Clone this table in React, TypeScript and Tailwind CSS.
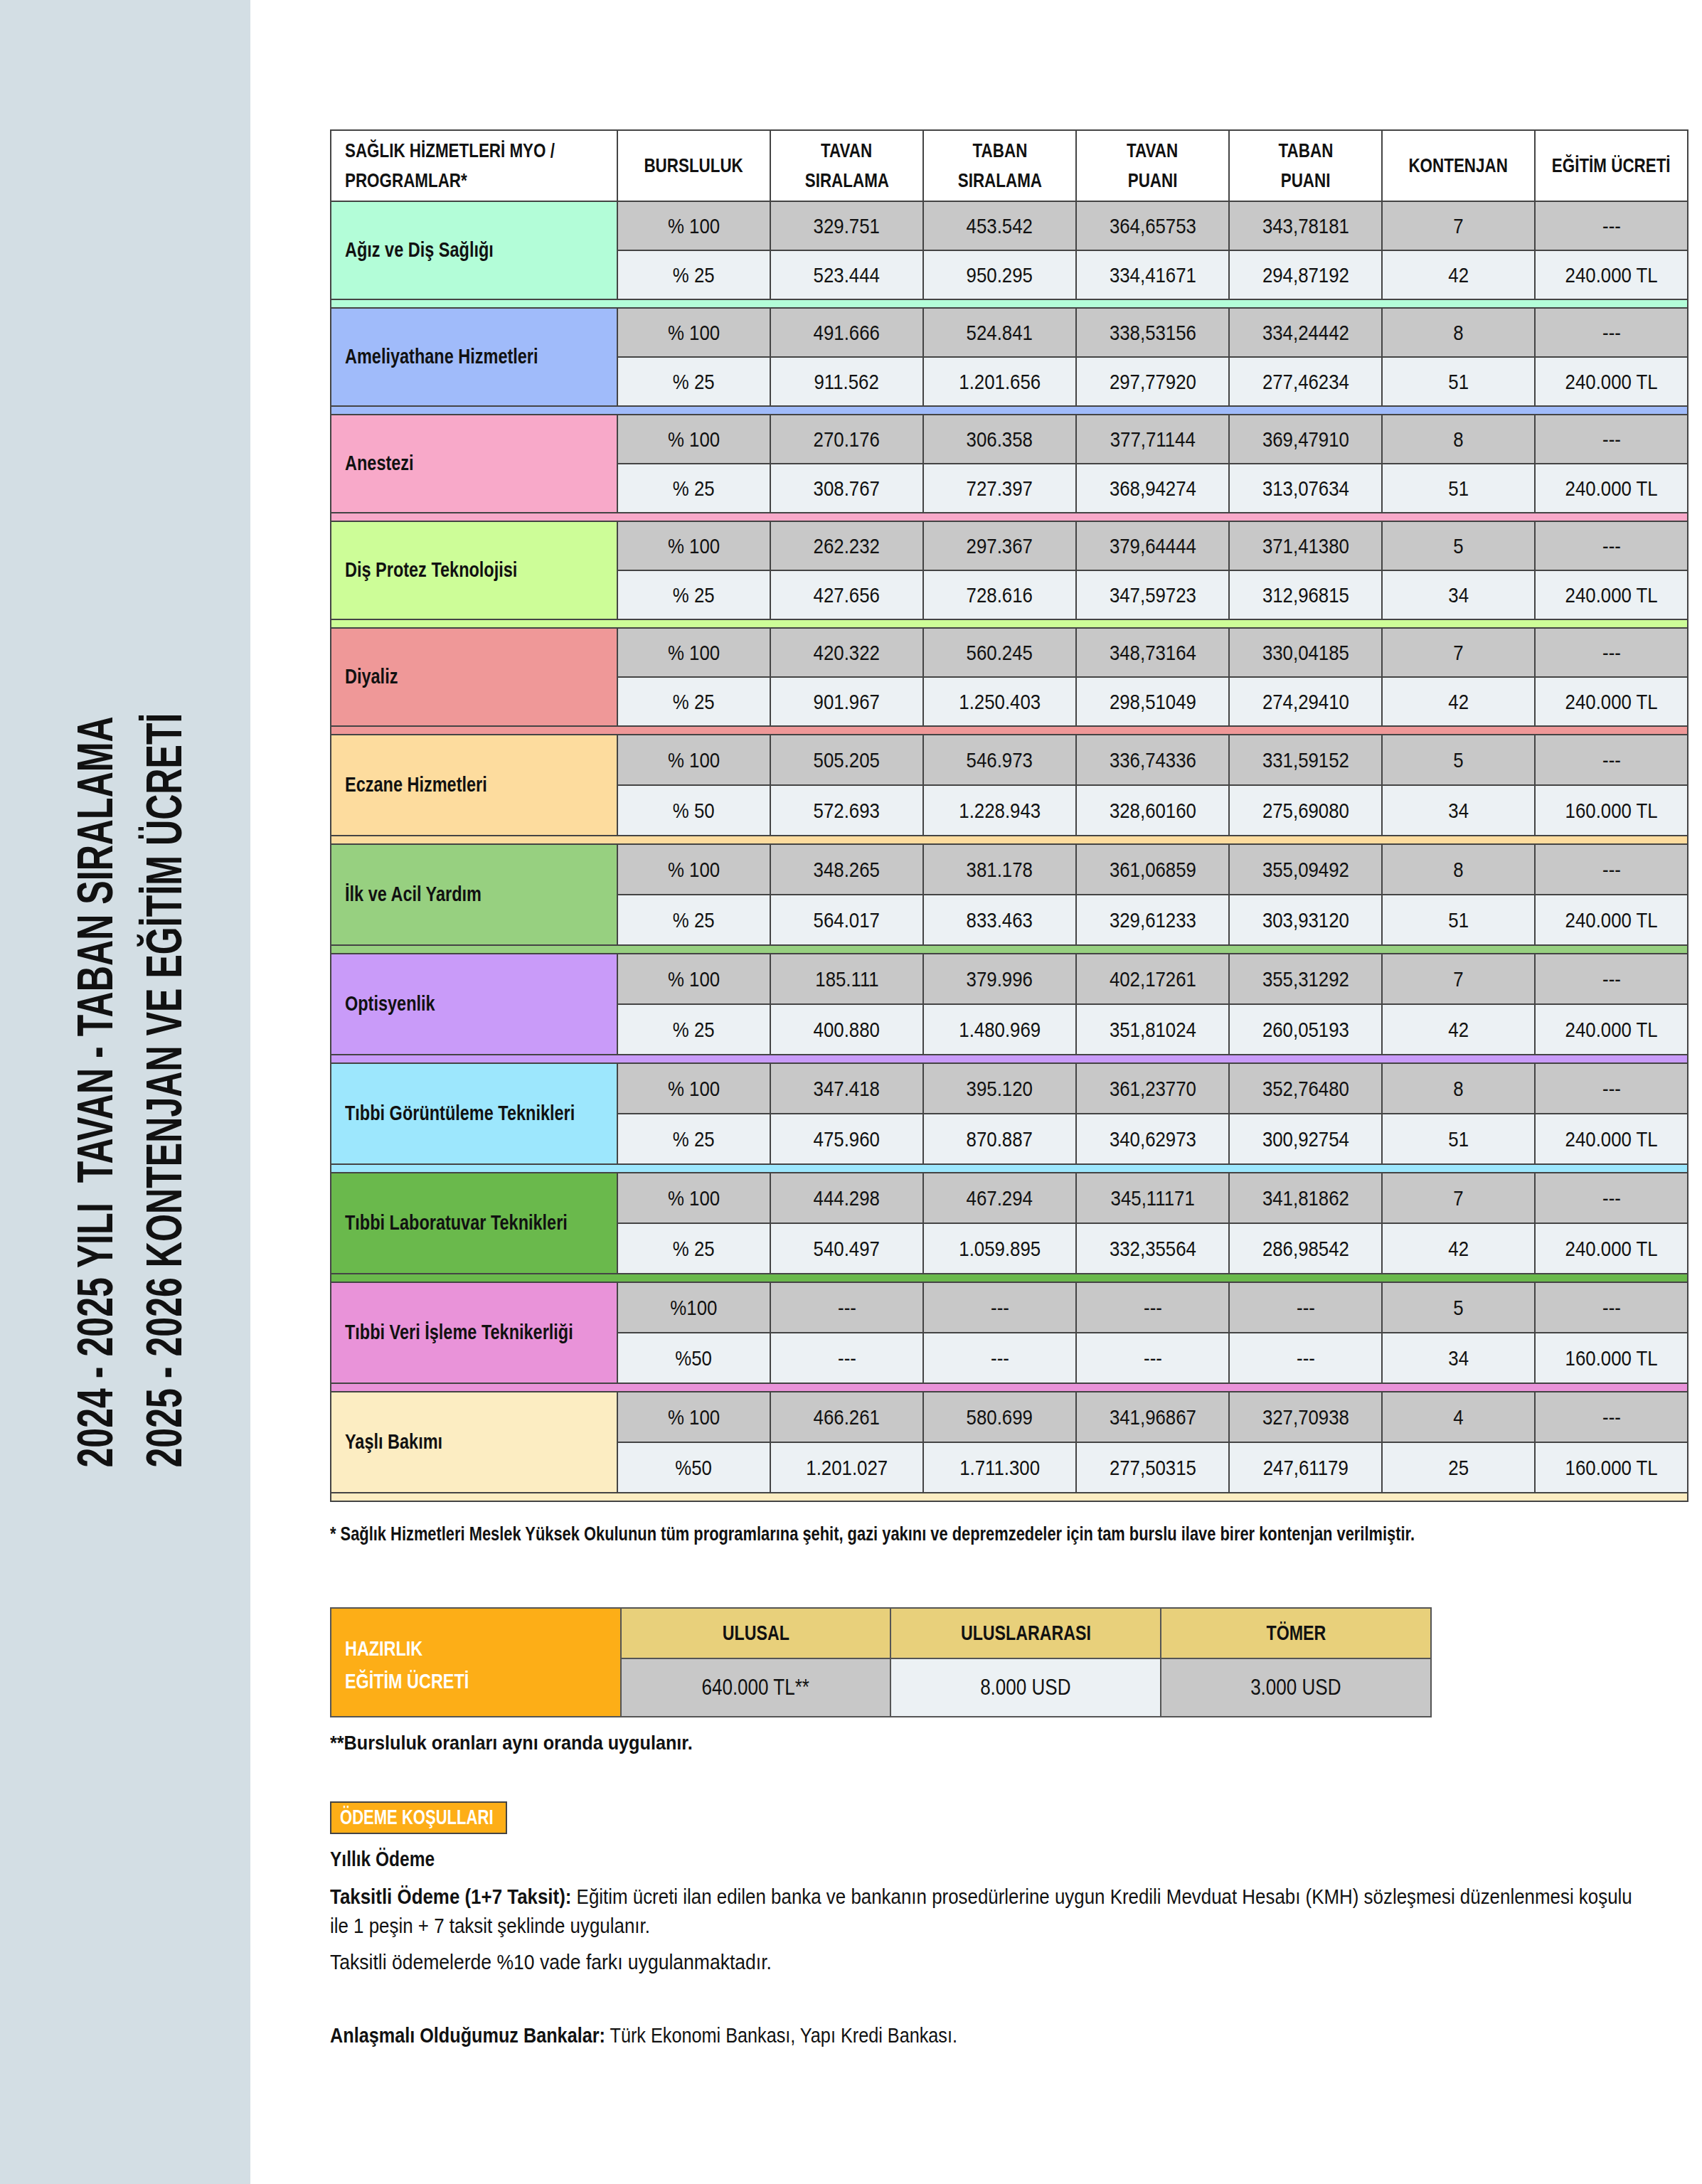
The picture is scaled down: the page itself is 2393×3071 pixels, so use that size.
import React from "react";

type Group = {
  name: string;
  color: string;
  rows: string[][];
};

const groups: Group[] = [
  {
    name: "Ağız ve Diş Sağlığı",
    color: "bg-[#b3fdd8]",
    rows: [
      ["% 100", "329.751", "453.542", "364,65753", "343,78181", "7", "---"],
      ["% 25", "523.444", "950.295", "334,41671", "294,87192", "42", "240.000 TL"],
    ],
  },
  {
    name: "Ameliyathane Hizmetleri",
    color: "bg-[#a0bbfa]",
    rows: [
      ["% 100", "491.666", "524.841", "338,53156", "334,24442", "8", "---"],
      ["% 25", "911.562", "1.201.656", "297,77920", "277,46234", "51", "240.000 TL"],
    ],
  },
  {
    name: "Anestezi",
    color: "bg-[#f8a9c9]",
    rows: [
      ["% 100", "270.176", "306.358", "377,71144", "369,47910", "8", "---"],
      ["% 25", "308.767", "727.397", "368,94274", "313,07634", "51", "240.000 TL"],
    ],
  },
  {
    name: "Diş Protez Teknolojisi",
    color: "bg-[#cdfd98]",
    rows: [
      ["% 100", "262.232", "297.367", "379,64444", "371,41380", "5", "---"],
      ["% 25", "427.656", "728.616", "347,59723", "312,96815", "34", "240.000 TL"],
    ],
  },
  {
    name: "Diyaliz",
    color: "bg-[#ef9898]",
    rows: [
      ["% 100", "420.322", "560.245", "348,73164", "330,04185", "7", "---"],
      ["% 25", "901.967", "1.250.403", "298,51049", "274,29410", "42", "240.000 TL"],
    ],
  },
  {
    name: "Eczane Hizmetleri",
    color: "bg-[#fddc9e]",
    rows: [
      ["% 100", "505.205", "546.973", "336,74336", "331,59152", "5", "---"],
      ["% 50", "572.693", "1.228.943", "328,60160", "275,69080", "34", "160.000 TL"],
    ],
  },
  {
    name: "İlk ve Acil Yardım",
    color: "bg-[#97d080]",
    rows: [
      ["% 100", "348.265", "381.178", "361,06859", "355,09492", "8", "---"],
      ["% 25", "564.017", "833.463", "329,61233", "303,93120", "51", "240.000 TL"],
    ],
  },
  {
    name: "Optisyenlik",
    color: "bg-[#c99bf9]",
    rows: [
      ["% 100", "185.111", "379.996", "402,17261", "355,31292", "7", "---"],
      ["% 25", "400.880", "1.480.969", "351,81024", "260,05193", "42", "240.000 TL"],
    ],
  },
  {
    name: "Tıbbi Görüntüleme Teknikleri",
    color: "bg-[#9de7fd]",
    rows: [
      ["% 100", "347.418", "395.120", "361,23770", "352,76480", "8", "---"],
      ["% 25", "475.960", "870.887", "340,62973", "300,92754", "51", "240.000 TL"],
    ],
  },
  {
    name: "Tıbbi Laboratuvar Teknikleri",
    color: "bg-[#6ab94c]",
    rows: [
      ["% 100", "444.298", "467.294", "345,11171", "341,81862", "7", "---"],
      ["% 25", "540.497", "1.059.895", "332,35564", "286,98542", "42", "240.000 TL"],
    ],
  },
  {
    name: "Tıbbi Veri İşleme Teknikerliği",
    color: "bg-[#e993d9]",
    rows: [
      ["%100", "---", "---", "---", "---", "5", "---"],
      ["%50", "---", "---", "---", "---", "34", "160.000 TL"],
    ],
  },
  {
    name: "Yaşlı Bakımı",
    color: "bg-[#fcedc2]",
    rows: [
      ["% 100", "466.261", "580.699", "341,96867", "327,70938", "4", "---"],
      ["%50", "1.201.027", "1.711.300", "277,50315", "247,61179", "25", "160.000 TL"],
    ],
  },
];

const headers = [
  ["BURSLULUK"],
  ["TAVAN", "SIRALAMA"],
  ["TABAN", "SIRALAMA"],
  ["TAVAN", "PUANI"],
  ["TABAN", "PUANI"],
  ["KONTENJAN"],
  ["EĞİTİM ÜCRETİ"],
];

// dar (condensed) yazı görünümü için yatay sıkıştırma
function Nar({ c, children }: { c: string; children: React.ReactNode }) {
  return <span className={`inline-block whitespace-nowrap ${c}`}>{children}</span>;
}

function ScoreTable() {
  return (
    <table className="table-fixed border-collapse w-[1909px] border-2 border-[#222]">
      <colgroup>
        <col className="w-[403px]" />
        {headers.map((_, i) => (
          <col key={i} className="w-[215px]" />
        ))}
      </colgroup>
      <thead>
        <tr className="h-[100px] bg-white">
          <th className="border-2 border-[#444] px-[19px] text-left align-middle text-[28px] leading-[42px] font-bold">
            <Nar c="origin-left scale-x-[0.8]">SAĞLIK HİZMETLERİ MYO /</Nar>
            <br />
            <Nar c="origin-left scale-x-[0.8]">PROGRAMLAR*</Nar>
          </th>
          {headers.map((h, i) => (
            <th key={i} className="border-2 border-[#444] text-center align-middle text-[28px] leading-[42px] font-bold">
              {h.map((line, j) => (
                <div key={j}>
                  <Nar c="origin-center scale-x-[0.8]">{line}</Nar>
                </div>
              ))}
            </th>
          ))}
        </tr>
      </thead>
      <tbody>
        {groups.map((g, gi) => {
          const rowH = gi < 5 ? "h-[69px]" : "h-[71px]";
          return (
            <React.Fragment key={g.name}>
              {g.rows.map((r, ri) => (
                <tr key={ri} className={`${rowH} ${ri === 0 ? "bg-[#c8c8c8]" : "bg-[#ecf1f4]"}`}>
                  {ri === 0 && (
                    <td rowSpan={2} className={`${g.color} border-2 border-[#444] px-[19px] text-[29px] font-bold align-middle overflow-hidden`}>
                      <Nar c="origin-left scale-x-[0.81]">{g.name}</Nar>
                    </td>
                  )}
                  {r.map((c, ci) => (
                    <td key={ci} className="border-2 border-[#444] text-center align-middle text-[30px]">
                      <Nar c="origin-center scale-x-[0.86]">{c}</Nar>
                    </td>
                  ))}
                </tr>
              ))}
              <tr className="h-[12px]">
                <td colSpan={8} className={`${g.color} border-2 border-[#444] p-0`} />
              </tr>
            </React.Fragment>
          );
        })}
      </tbody>
    </table>
  );
}

function PrepTable() {
  return (
    <table className="table-fixed border-collapse w-[1547px] border-2 border-[#555]">
      <colgroup>
        <col className="w-[408px]" />
        <col className="w-[379px]" />
        <col className="w-[380px]" />
        <col className="w-[380px]" />
      </colgroup>
      <tbody>
        <tr className="h-[71px] bg-[#e8d07b]">
          <td rowSpan={2} className="bg-[#fdae17] border-2 border-[#555] px-[19px] pt-[6px] text-white text-[30px] leading-[46px] font-bold align-middle">
            <Nar c="origin-left scale-x-[0.78]">HAZIRLIK</Nar>
            <br />
            <Nar c="origin-left scale-x-[0.78]">EĞİTİM ÜCRETİ</Nar>
          </td>
          <td className="border-2 border-[#555] text-center text-[29px] font-bold">
            <Nar c="origin-center scale-x-[0.8]">ULUSAL</Nar>
          </td>
          <td className="border-2 border-[#555] text-center text-[29px] font-bold">
            <Nar c="origin-center scale-x-[0.8]">ULUSLARARASI</Nar>
          </td>
          <td className="border-2 border-[#555] text-center text-[29px] font-bold">
            <Nar c="origin-center scale-x-[0.8]">TÖMER</Nar>
          </td>
        </tr>
        <tr className="h-[82px]">
          <td className="bg-[#c8c8c8] border-2 border-[#555] text-center text-[31px]">
            <Nar c="origin-center scale-x-[0.84]">640.000 TL**</Nar>
          </td>
          <td className="bg-[#ecf1f4] border-2 border-[#555] text-center text-[31px]">
            <Nar c="origin-center scale-x-[0.84]">8.000 USD</Nar>
          </td>
          <td className="bg-[#c8c8c8] border-2 border-[#555] text-center text-[31px]">
            <Nar c="origin-center scale-x-[0.84]">3.000 USD</Nar>
          </td>
        </tr>
      </tbody>
    </table>
  );
}

export default function App() {
  return (
    <div className="flex min-h-[3071px] w-[2393px] overflow-hidden bg-white text-[#111] font-['Liberation_Sans',Arial,sans-serif]">
      {/* yan şerit */}
      <aside className="w-[352px] shrink-0 bg-[#d3dee4] flex items-end pl-[86px] pb-[797px]">
        <div className="[writing-mode:vertical-rl] rotate-180 scale-y-[0.716] text-[70px] leading-[97px] font-bold whitespace-nowrap">
          <div>2024 - 2025 YILI&nbsp; TAVAN - TABAN SIRALAMA</div>
          <div>2025 - 2026 KONTENJAN VE EĞİTİM ÜCRETİ</div>
        </div>
      </aside>

      <main className="flex-1 pl-[112px] pt-[182px]">
        <ScoreTable />

        <div className="mt-[29px] w-[1950px] origin-left scale-x-[0.81] text-[27px] leading-[32px] font-bold">
          * Sağlık Hizmetleri Meslek Yüksek Okulunun tüm programlarına şehit, gazi yakını ve depremzedeler için tam burslu ilave birer kontenjan verilmiştir.
        </div>

        <div className="mt-[87px]">
          <PrepTable />
        </div>

        <div className="mt-[19px] w-[1000px] origin-left scale-x-[0.9] text-[28px] leading-[34px] font-bold">
          **Bursluluk oranları aynı oranda uygulanır.
        </div>

        <div className="mt-[65px] flex items-center w-[249px] h-[46px] bg-[#fdae17] border-2 border-[#444] px-[12px] text-white text-[29px] font-bold">
          <Nar c="origin-left scale-x-[0.76]">ÖDEME KOŞULLARI</Nar>
        </div>

        <div className="mt-[17px] w-[1000px] origin-left scale-x-[0.845] text-[29px] leading-[36px] font-bold">Yıllık Ödeme</div>

        <div className="mt-[15px] w-[2330px] origin-left scale-x-[0.893] text-[29px] leading-[41px]">
          <span className="font-bold">Taksitli Ödeme (1+7 Taksit):</span> Eğitim ücreti ilan edilen banka ve bankanın prosedürlerine uygun Kredili Mevduat Hesabı (KMH) sözleşmesi düzenlenmesi koşulu
          <br />
          ile 1 peşin + 7 taksit şeklinde uygulanır.
        </div>
        <div className="mt-[10px] w-[2330px] origin-left scale-x-[0.915] text-[29px] leading-[41px]">
          Taksitli ödemelerde %10 vade farkı uygulanmaktadır.
        </div>

        <div className="mt-[62px] w-[2330px] origin-left scale-x-[0.87] text-[29px] leading-[41px]">
          <span className="font-bold">Anlaşmalı Olduğumuz Bankalar:</span> Türk Ekonomi Bankası, Yapı Kredi Bankası.
        </div>
      </main>
    </div>
  );
}
